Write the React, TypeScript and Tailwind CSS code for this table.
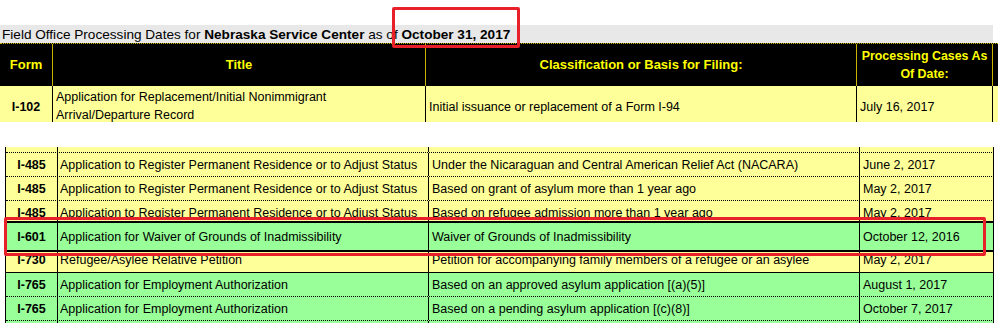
import React from 'react';

type RowData = {
  form: string;
  title: string;
  cls: string;
  date: string;
  bg: string;
  box: string; // row height + borders
  shift: string; // vertical offset of the text line inside a clipped row
};

const lowerRows: RowData[] = [
  {
    form: 'I-485',
    title: 'Application to Register Permanent Residence or to Adjust Status',
    cls: 'Based on grant of asylum by Cuban Adjustment Act',
    date: 'June 2, 2017',
    bg: 'bg-[#ffff99]',
    box: 'h-[6px] border-b border-dotted border-black',
    shift: 'mt-[-19px]',
  },
  {
    form: 'I-485',
    title: 'Application to Register Permanent Residence or to Adjust Status',
    cls: 'Under the Nicaraguan and Central American Relief Act (NACARA)',
    date: 'June 2, 2017',
    bg: 'bg-[#ffff99]',
    box: 'h-[24px] border-b border-dotted border-black',
    shift: 'mt-0',
  },
  {
    form: 'I-485',
    title: 'Application to Register Permanent Residence or to Adjust Status',
    cls: 'Based on grant of asylum more than 1 year ago',
    date: 'May 2, 2017',
    bg: 'bg-[#ffff99]',
    box: 'h-[24px] border-b border-dotted border-black',
    shift: 'mt-0',
  },
  {
    form: 'I-485',
    title: 'Application to Register Permanent Residence or to Adjust Status',
    cls: 'Based on refugee admission more than 1 year ago',
    date: 'May 2, 2017',
    bg: 'bg-[#ffff99]',
    box: 'h-[20px]',
    shift: 'mt-0',
  },
  {
    form: 'I-601',
    title: 'Application for Waiver of Grounds of Inadmissibility',
    cls: 'Waiver of Grounds of Inadmissibility',
    date: 'October 12, 2016',
    bg: 'bg-[#99ff99]',
    box: 'h-[31px] border-t-2 border-b-2 border-black',
    shift: 'mt-[2px]',
  },
  {
    form: 'I-730',
    title: 'Refugee/Asylee Relative Petition',
    cls: 'Petition for accompanying family members of a refugee or an asylee',
    date: 'May 2, 2017',
    bg: 'bg-[#ffff99]',
    box: 'h-[21px] border-b border-black',
    shift: 'mt-[-4px]',
  },
  {
    form: 'I-765',
    title: 'Application for Employment Authorization',
    cls: 'Based on an approved asylum application [(a)(5)]',
    date: 'August 1, 2017',
    bg: 'bg-[#99ff99]',
    box: 'h-[24px] border-b border-dotted border-black',
    shift: 'mt-0',
  },
  {
    form: 'I-765',
    title: 'Application for Employment Authorization',
    cls: 'Based on a pending asylum application [(c)(8)]',
    date: 'October 7, 2017',
    bg: 'bg-[#99ff99]',
    box: 'h-[24px] border-b border-dotted border-black',
    shift: 'mt-0',
  },
  {
    form: 'I-765',
    title: 'Application for Employment Authorization',
    cls: 'Based on a pending asylum application',
    date: 'October 7, 2017',
    bg: 'bg-[#99ff99]',
    box: 'h-[24px]',
    shift: 'mt-0',
  },
];

const cell = 'h-full overflow-hidden whitespace-nowrap border-r border-black';

function LowerRow({ row }: { row: RowData }) {
  return (
    <div className={`grid grid-cols-[52px_371px_431px_134px] ${row.bg} ${row.box} overflow-hidden`}>
      <div className={`${cell} text-center font-bold`}>
        <div className={`${row.shift} leading-[24px]`}>{row.form}</div>
      </div>
      <div className={`${cell} pl-[2px]`}>
        <div className={`${row.shift} leading-[24px]`}>{row.title}</div>
      </div>
      <div className={`${cell} pl-[3px]`}>
        <div className={`${row.shift} leading-[24px]`}>{row.cls}</div>
      </div>
      <div className={`${cell} pl-[3px]`}>
        <div className={`${row.shift} leading-[24px]`}>{row.date}</div>
      </div>
    </div>
  );
}

export default function App() {
  return (
    <div className="relative w-[998px] h-[323px] overflow-hidden bg-white text-black text-[12.5px] font-['Liberation_Sans',Arial,sans-serif]">
      <div className="h-[25px]" />

      {/* title bar */}
      <div className="w-[993px] h-[18px] bg-[#e8e8e8] pl-[2px] text-[13.6px] leading-[19px] whitespace-nowrap">
        Field Office Processing Dates for <b>Nebraska Service Center</b> as of <b>October 31, 2017</b>
      </div>

      {/* header */}
      <div className="grid grid-cols-[53px_373px_431px_136px] h-[43px] bg-black text-[#ffff00] font-bold text-[13px] border-t border-dotted border-[#c8b400]">
        <div className="flex items-center justify-center border-r border-[#c8b400]">Form</div>
        <div className="flex items-center justify-center border-r border-[#c8b400]">Title</div>
        <div className="flex items-center justify-center border-r border-[#c8b400]">Classification or Basis for Filing:</div>
        <div className="flex items-center justify-center text-center text-[12.4px] leading-[18px] whitespace-nowrap border-r border-[#c8b400]">
          Processing Cases As
          <br />
          Of Date:
        </div>
      </div>

      {/* first row */}
      <div className="grid grid-cols-[53px_373px_431px_136px] h-[36px] bg-[#ffff99] overflow-hidden">
        <div className="border-r border-black text-center font-bold pt-[12px] leading-[18px]">I-102</div>
        <div className="border-r border-black pl-[3px] pt-[2px] leading-[18px] whitespace-nowrap">
          Application for Replacement/Initial Nonimmigrant
          <br />
          Arrival/Departure Record
        </div>
        <div className="border-r border-black pl-[3px] pt-[12px] leading-[18px] whitespace-nowrap">
          Initial issuance or replacement of a Form I-94
        </div>
        <div className="border-r border-black pl-[3px] pt-[12px] leading-[18px] whitespace-nowrap">July 16, 2017</div>
      </div>

      <div className="h-[25px]" />

      {/* lower part of the table */}
      <div className="ml-[5px] w-[989px] border-l border-black">
        {lowerRows.map((row, i) => (
          <LowerRow key={i} row={row} />
        ))}
      </div>

      {/* red highlight boxes */}
      <div className="absolute left-[392px] top-[7px] w-[128px] h-[41px] border-[3px] border-[#e8202a] rounded-[2px]" />
      <div className="absolute left-[4px] top-[217px] w-[982px] h-[39px] border-[3px] border-[#e8202a] rounded-[2px]" />
    </div>
  );
}
